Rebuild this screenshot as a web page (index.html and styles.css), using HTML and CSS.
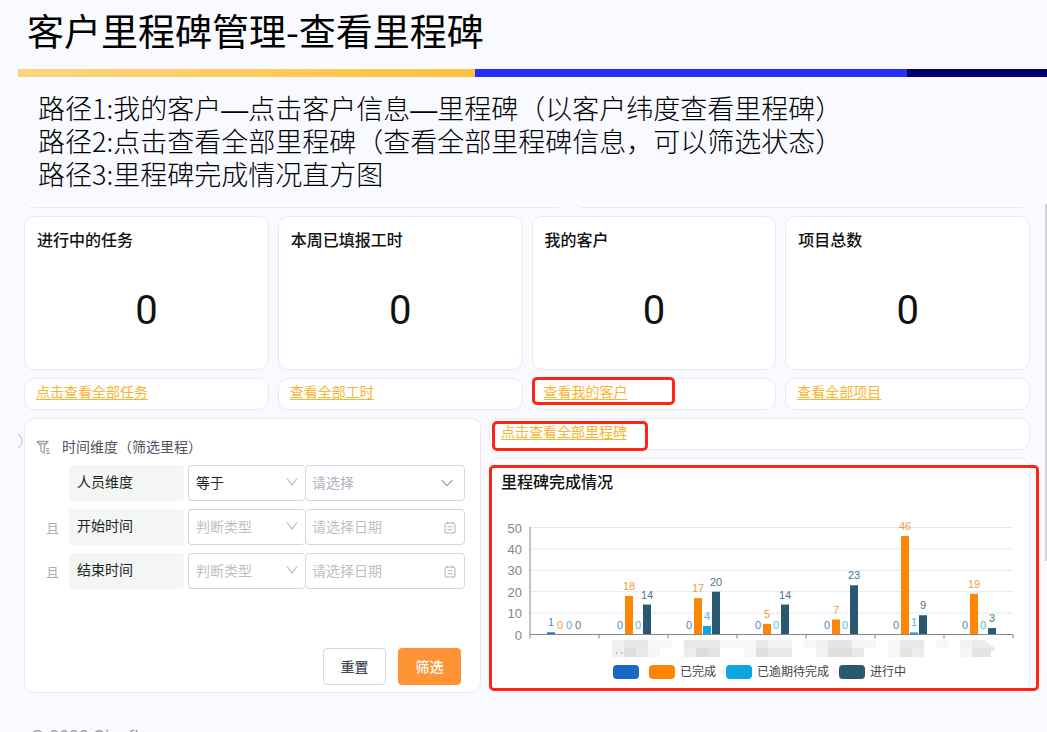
FILE: index.html
```html
<!DOCTYPE html>
<html lang="zh-CN">
<head>
<meta charset="utf-8">
<meta name="viewport" content="width=device-width, initial-scale=1">
<title>客户里程碑管理-查看里程碑</title>
<link rel="stylesheet" href="styles.css">
</head>
<body>
<header class="head">
  <h1 class="head-title">客户里程碑管理-查看里程碑</h1>
  <div class="stripe"><span class="stripe-gold"></span><span class="stripe-blue"></span><span class="stripe-navy"></span></div>
  <div class="paths">
    <p>路径1:我的客户<span class="dash">—</span>点击客户信息<span class="dash">—</span>里程碑（以客户纬度查看里程碑）</p>
    <p>路径2:点击查看全部里程碑（查看全部里程碑信息，可以筛选状态）</p>
    <p>路径3:里程碑完成情况直方图</p>
  </div>
</header>

<main class="board">
  <span class="scroll-thumb"></span>
  <button class="handle" type="button" aria-label="展开">
    <svg width="6" height="18" viewBox="0 0 6 18"><path d="M0 2Q4 5 4 9Q4 13 0 16" fill="none" stroke="#c5cbd8" stroke-width="1.2"/></svg>
  </button>
  <div class="cut-row"><div class="cut cut-a"></div><div class="cut cut-b"></div></div>

  <section class="stats">
    <article class="card stat"><h2 class="card-title">进行中的任务</h2><p class="num">0</p></article>
    <article class="card stat"><h2 class="card-title">本周已填报工时</h2><p class="num">0</p></article>
    <article class="card stat"><h2 class="card-title">我的客户</h2><p class="num">0</p></article>
    <article class="card stat"><h2 class="card-title">项目总数</h2><p class="num">0</p></article>
    <div class="card link-card"><a href="#">点击查看全部任务</a></div>
    <div class="card link-card"><a href="#">查看全部工时</a></div>
    <div class="card link-card"><a href="#">查看我的客户</a><span class="mark mark-customer"></span></div>
    <div class="card link-card"><a href="#">查看全部项目</a></div>
  </section>

  <section class="lower">
    <form class="card filter">
      <h2 class="filter-title">
        <svg width="15" height="15" viewBox="0 0 15 15" fill="none" stroke="#9aa0ad" stroke-width="1.3" stroke-linejoin="round"><path d="M1 1.5H12L8.2 6V13.2L5 11V6L1 1.5Z"/><path d="M3.5 3.8H9.5"/><path d="M10.2 8.7H13M10.2 11H13M10.2 13.3H14"/></svg>
        时间维度（筛选里程）
      </h2>
      <div class="rows">
        <div class="row">
          <span class="and"></span><label class="name" for="v1">人员维度</label>
          <span class="field op"><select aria-label="人员维度判断类型"><option>等于</option></select><svg width="12" height="10" viewBox="0 0 12 10"><path d="M1 1.5L6 8L11 1.5"/></svg></span>
          <span class="field val"><select id="v1" class="hint-blue"><option>请选择</option></select><svg class="wide" width="12" height="10" viewBox="0 0 12 10"><path d="M0.5 2L6 7.5L11.5 2"/></svg></span>
        </div>
        <div class="row">
          <span class="and">且</span><label class="name" for="v2">开始时间</label>
          <span class="field op"><select class="hint" aria-label="开始时间判断类型"><option>判断类型</option></select><svg width="12" height="10" viewBox="0 0 12 10"><path d="M1 1.5L6 8L11 1.5"/></svg></span>
          <span class="field val"><input id="v2" type="text" placeholder="请选择日期"><svg width="12" height="13" viewBox="0 0 12 13"><rect x="1" y="2" width="10" height="10" rx="2"/><path d="M3.5 0.8V3M8.5 0.8V3M3.3 5.8H8.7M3.3 8.8H8.7"/></svg></span>
        </div>
        <div class="row">
          <span class="and">且</span><label class="name" for="v3">结束时间</label>
          <span class="field op"><select class="hint" aria-label="结束时间判断类型"><option>判断类型</option></select><svg width="12" height="10" viewBox="0 0 12 10"><path d="M1 1.5L6 8L11 1.5"/></svg></span>
          <span class="field val"><input id="v3" type="text" placeholder="请选择日期"><svg width="12" height="13" viewBox="0 0 12 13"><rect x="1" y="2" width="10" height="10" rx="2"/><path d="M3.5 0.8V3M8.5 0.8V3M3.3 5.8H8.7M3.3 8.8H8.7"/></svg></span>
        </div>
      </div>
      <div class="actions"><button class="btn" type="reset">重置</button><button class="btn primary" type="button">筛选</button></div>
    </form>

    <div class="right">
      <div class="card link-card"><a href="#">点击查看全部里程碑</a><span class="mark mark-all"></span></div>
      <article class="card chart-card">
        <h2 class="card-title">里程碑完成情况</h2>
        <svg id="chart" class="chart" viewBox="0 0 539 166" role="img" aria-label="里程碑完成情况"></svg>
        <ul class="legend">
          <li><i class="sw sw-0"></i></li>
          <li><i class="sw sw-1"></i>已完成</li>
          <li><i class="sw sw-2"></i>已逾期待完成</li>
          <li><i class="sw sw-3"></i>进行中</li>
        </ul>
        <span class="mark mark-chart"></span>
      </article>
    </div>
  </section>
</main>
<footer class="foot">© 2023 Qingflow</footer>
<script src="chart.js"></script>
</body>
</html>
```

FILE: styles.css
```css
* { box-sizing: border-box; }

body {
  margin: 0;
  height: 100vh;
  overflow: hidden;
  background: #f9faff;
  color: #111;
  font-family: "Liberation Sans", "Noto Sans CJK SC", sans-serif;
  font-size: 14px;
}

h1, h2, p, ul { margin: 0; padding: 0; }

.head { padding-left: 18px; font-family: "Noto Sans CJK SC", sans-serif; }
.head-title {
  padding: 6px 0 0 9px;
  font-size: 37px;
  line-height: 48px;
  font-weight: 400;
  color: #000;
}
.stripe { display: flex; height: 8px; margin-top: 15px; }
.stripe-gold { flex: 457; background: linear-gradient(90deg, #fcd581, #ffc13c); }
.stripe-blue { flex: 432; background: #262dfb; }
.stripe-navy { flex: 140; background: #06006e; }
.paths {
  padding: 14px 0 14px 20px;
  font-size: 27px;
  line-height: 33px;
  font-weight: 300;
  color: #000;
}
.dash { font-family: "Liberation Sans", sans-serif; line-height: 1; }

.board { position: relative; padding: 0 17px 0 24px; }
.scroll-thumb {
  position: absolute;
  top: 0;
  right: 0;
  width: 2px;
  height: 357px;
  background: #d3d3d7;
}
.handle {
  position: absolute;
  left: 18px;
  top: 228px;
  width: 6px;
  height: 18px;
  padding: 0;
  border: 0;
  background: none;
}
.handle svg { display: block; }

.cut-row { display: flex; gap: 8px; height: 4px; margin-bottom: 8px; overflow: hidden; align-items: flex-end; }
.cut { height: 30px; background: #fff; border: 1px solid #e8eaf1; border-radius: 10px; }
.cut-a { flex: 542; }
.cut-b { flex: 456; }

.card {
  position: relative;
  background: #fff;
  border: 1px solid #e8eaf1;
  border-radius: 10px;
}
.card-title { font-size: 16px; line-height: 24px; font-weight: 500; }

.stats { display: grid; grid-template-columns: repeat(4, 1fr); gap: 8px 9px; }
.stat { height: 154px; padding: 12px; }
.num {
  padding-top: 32px;
  font-family: Roboto, sans-serif;
  font-size: 40px;
  line-height: 52px;
  font-weight: 400;
  text-align: center;
}
.link-card { height: 32px; padding: 2px 11px; line-height: 22px; }
.link-card a { color: #fbb42f; text-decoration: underline; text-underline-offset: 2px; }

.lower { display: grid; grid-template-columns: 457fr 541fr; gap: 8px; margin-top: 8px; }

.filter { display: flex; flex-direction: column; padding: 17px 15px 7px 11px; color: #222; }
.filter-title {
  display: flex;
  align-items: center;
  gap: 11px;
  font-size: 14px;
  line-height: 22px;
  font-weight: 400;
  color: #4f5562;
}
.rows { display: grid; gap: 8px; margin-top: 7px; }
.row { display: grid; grid-template-columns: 33px 115fr 121fr 160fr; height: 36px; }
.and { align-self: center; text-align: center; font-size: 13px; color: #a9adb5; }
.name { padding: 0 8px; line-height: 34px; border-radius: 4px; background: #f4f6f5; }
.field { position: relative; display: block; }
.op { margin-left: 4px; }
.field select, .field input {
  display: block;
  width: 100%;
  height: 100%;
  padding: 0 6px;
  margin: 0;
  border: 1px solid #cfd6e6;
  border-radius: 4px;
  background: #fff;
  color: #222;
  font: inherit;
  appearance: none;
}
.op select { padding: 0 7px; border-right: 0; }
.field .hint { color: #bfbfc1; }
.field .hint-blue { color: #adb4c1; }
.field input::placeholder { color: #bfbfc1; }
.field svg {
  position: absolute;
  right: 9px;
  top: 12px;
  fill: none;
  stroke: #b5b7bb;
  stroke-width: 1.1;
  pointer-events: none;
}
.op svg { right: 7px; }
.field svg.wide { right: 12px; top: 13px; stroke: #a4abb8; stroke-width: 1.3; }

.actions { display: flex; justify-content: flex-end; gap: 12px; margin-top: auto; padding-right: 4px; }
.btn {
  width: 63px;
  height: 37px;
  padding: 0 0 2px;
  border: 1px solid #d2d9e7;
  border-radius: 4px;
  background: #fff;
  color: #454b57;
  font: inherit;
  font-weight: 500;
}
.primary { border-color: #fe9436; background: #fe9436; color: #fff; }

.right { display: grid; gap: 8px; }
.chart-card { padding: 12px 0 13px; }
.chart-card .card-title { padding-left: 11px; }
.chart { display: block; width: 100%; }
.axis-text { font-size: 13px; fill: #85868b; text-anchor: end; }
.bar-text { font-size: 11px; text-anchor: middle; }
.grid-line { stroke: #e4e8f2; }
.axis-line { stroke: #85868e; }

.legend {
  display: flex;
  justify-content: center;
  gap: 10px;
  padding-top: 4px;
  list-style: none;
  font-size: 12px;
  line-height: 14px;
  color: #444;
}
.legend li { display: flex; gap: 5px; }
.sw { width: 26px; height: 14px; border-radius: 4px; }
.sw-0 { background: #1669c4; }
.sw-1 { background: #ff8605; }
.sw-2 { background: #0ba7e2; }
.sw-3 { background: #285971; }

.mark { position: absolute; z-index: 1; border: 3px solid #ff2414; border-radius: 5px; pointer-events: none; }
.mark-customer { left: -1px; top: -2px; width: 143px; height: 28px; }
.mark-all { left: 2px; top: 2px; width: 156px; height: 30px; }
.mark-chart { left: -1px; right: -10px; top: 6px; bottom: 1px; }

.foot { padding: 32px 0 0 30px; font-family: Inter, sans-serif; font-size: 16px; line-height: 22px; color: #999; }
```

FILE: chart.js
```js
const svg = document.getElementById('chart');
const NS = 'http://www.w3.org/2000/svg';
const colors = ['#1669c4', '#ff8605', '#0ba7e2', '#285971'];
const labelColors = ['#4c86cd', '#f59a45', '#4fb9df', '#4f7588'];
const data = [
  [1, 0, 0, 0], [0, 18, 0, 14], [0, 17, 4, 20], [0, 5, 0, 14],
  [0, 7, 0, 23], [0, 46, 1, 9], [0, 19, 0, 3]
];
const left = 40, base = 139.5, step = 69, unit = 2.14;

function add(tag, attrs, text) {
  const el = document.createElementNS(NS, tag);
  for (const k in attrs) el.setAttribute(k, attrs[k]);
  if (text !== undefined) el.textContent = text;
  svg.appendChild(el);
}

for (let v = 0; v <= 50; v += 10) {
  const y = base - v * unit;
  if (v) add('line', { x1: left, x2: left + step * 7, y1: y, y2: y, class: 'grid-line' });
  add('text', { x: 32, y: y + 5, class: 'axis-text' }, v);
}
data.forEach((group, g) => {
  group.forEach((v, i) => {
    const x = left + g * step + 21 + i * 9;
    if (v) add('rect', { x: x - 4, y: base - v * unit, width: 8, height: v * unit, fill: colors[i] });
    add('text', { x, y: base - v * unit - 6, class: 'bar-text', fill: labelColors[i] }, v);
  });
});
add('path', { d: 'M40 32V143.5M40 139.5H523', class: 'axis-line', fill: 'none' });
for (let i = 1; i <= 7; i++) {
  add('line', { x1: left + i * step, x2: left + i * step, y1: base, y2: base + 4, class: 'axis-line' });
}

/* masked category names: x, row, width, colour */
[
  [122, 0, 12, '#f0f0f1'], [134, 0, 24, '#e6e6e8'], [158, 0, 24, '#f7f7f8'],
  [122, 1, 12, '#f1f1f2'], [134, 1, 12, '#dedee0'], [146, 1, 12, '#e8e8ea'], [158, 1, 12, '#f6f6f7'],
  [194, 0, 36, '#e9e9eb'], [230, 0, 12, '#f9f9fa'], [194, 1, 12, '#ededef'], [206, 1, 12, '#dcdcde'], [218, 1, 12, '#e3e3e5'],
  [242, 0, 24, '#f9f9fa'], [266, 0, 12, '#eaeaec'], [278, 0, 24, '#f2f2f3'],
  [254, 1, 12, '#f7f7f8'], [266, 1, 12, '#dedee0'], [278, 1, 24, '#e8e8ea'],
  [314, 0, 12, '#f8f8f9'], [326, 0, 12, '#f0f0f1'], [338, 0, 24, '#e5e5e7'], [362, 0, 24, '#f6f6f7'],
  [326, 1, 12, '#f2f2f3'], [338, 1, 24, '#dfdfe1'], [362, 1, 12, '#e9e9eb'],
  [398, 0, 12, '#f8f8f9'], [410, 0, 24, '#e8e8ea'], [446, 0, 12, '#f8f8f9'],
  [398, 1, 12, '#f7f7f8'], [410, 1, 12, '#e4e4e6'], [422, 1, 12, '#ededef'],
  [470, 0, 12, '#f3f3f4'], [482, 0, 12, '#ebebed'], [470, 1, 12, '#f6f6f7'], [482, 1, 19, '#e4e4e6']
].forEach(([x, row, width, fill]) => add('rect', { x, y: 145 + row * 8, width, height: row ? 9 : 8, fill }));
add('path', { d: 'M494 145L505 153V156H501V153H494Z', fill: '#ececee' });
add('path', { d: 'M126 158h1.5M131 158h1.5', stroke: '#888', 'stroke-width': 1 });
```
